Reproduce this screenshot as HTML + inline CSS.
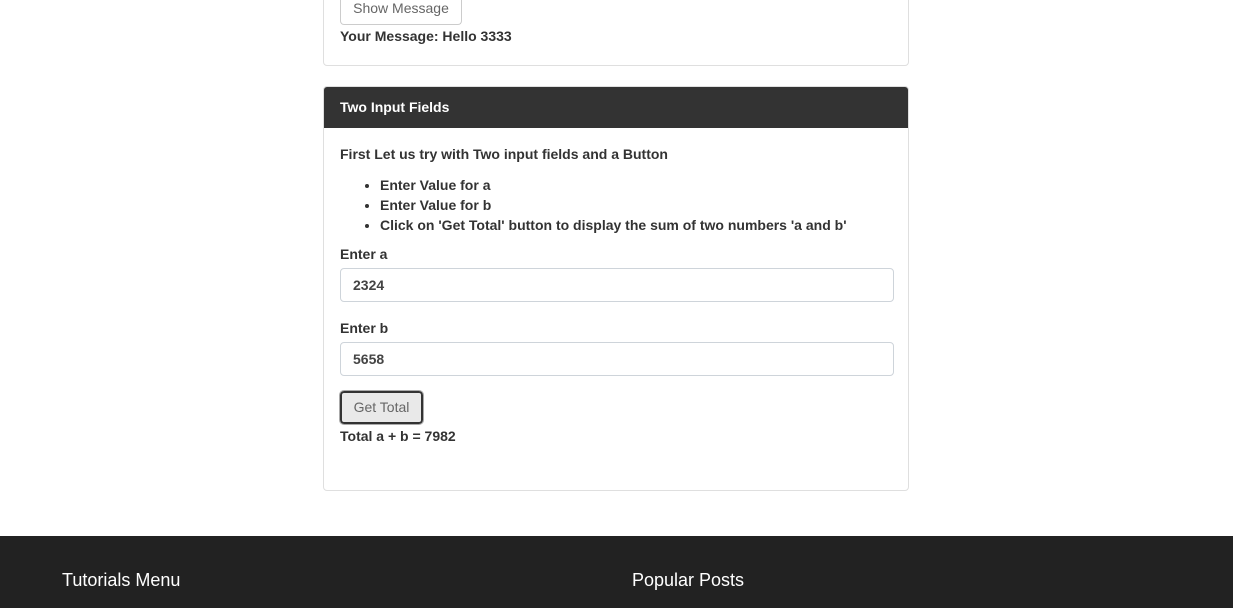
<!DOCTYPE html>
<html><head><meta charset="utf-8"><style>
*{box-sizing:border-box}
body{margin:0;width:1233px;height:608px;overflow:hidden;background:#fff;font-family:"Liberation Sans",sans-serif;color:#212529;position:relative}
.card{position:absolute;left:323px;width:586px;border:1px solid #dfdfdf;border-radius:4px;background:#fff}
.b{font-weight:bold;font-size:14px}
.btn{position:absolute;border:1px solid #ccc;border-radius:4px;font-size:14px;color:#666;background:#fff;text-align:center}
.inp{position:absolute;left:16px;width:554px;height:34px;border:1px solid #ced4da;border-radius:4px;padding:8px 12px;font-size:14px;font-weight:bold;color:#444}
.t{position:absolute;font-size:14px;font-weight:bold;color:#333}
</style></head><body>
<div class="card" style="top:-10px;height:76px">
<div class="btn" style="left:16px;top:0;width:122px;height:34px;line-height:34px;border-top:none;border-radius:0 0 4px 4px">Show Message</div>
<div class="t" style="left:16px;top:37px">Your Message: Hello 3333</div>
</div>
<div class="card" style="top:86px;height:405px">
<div style="background:#333;color:#fff;height:41px;line-height:41px;padding-left:16px;font-weight:bold;font-size:14px;border-radius:3px 3px 0 0">Two Input Fields</div>
<div class="t" style="left:16px;top:59px">First Let us try with Two input fields and a Button</div>
<ul class="t" style="left:16px;top:88px;margin:0;padding-left:40px;line-height:20px">
<li>Enter Value for a</li><li>Enter Value for b</li><li>Click on 'Get Total' button to display the sum of two numbers 'a and b'</li></ul>
<div class="t" style="left:16px;top:159px">Enter a</div>
<div class="inp" style="top:181px">2324</div>
<div class="t" style="left:16px;top:233px">Enter b</div>
<div class="inp" style="top:255px">5658</div>
<div class="btn" style="left:16px;top:304px;width:83px;height:33px;line-height:29px;background:#e9e9e9;border:2px solid #333;outline:1px solid #aaa">Get Total</div>
<div class="t" style="left:16px;top:341px">Total a + b = 7982</div>
</div>
<div style="position:absolute;left:0;top:536px;width:1233px;height:72px;background:#222">
<div style="position:absolute;left:62px;top:34px;color:#fff;font-size:18px">Tutorials Menu</div>
<div style="position:absolute;left:632px;top:34px;color:#fff;font-size:18px">Popular Posts</div>
</div>
</body></html>
